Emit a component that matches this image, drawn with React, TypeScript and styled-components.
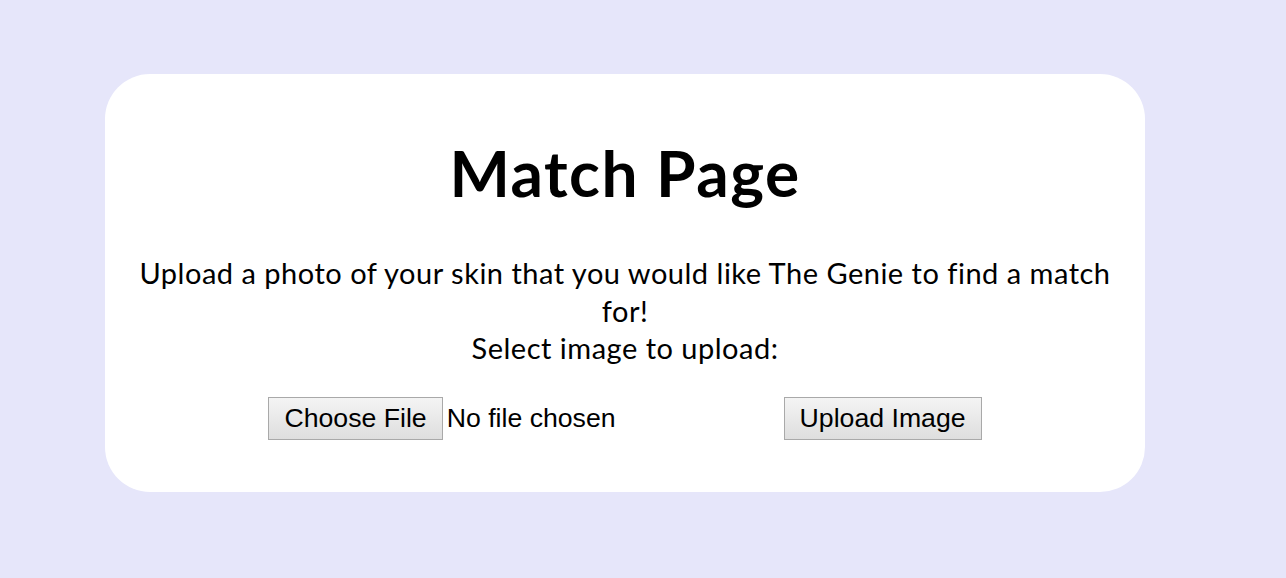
import React from "react";
import styled, { createGlobalStyle } from "styled-components";

const Global = createGlobalStyle`
  html, body { margin: 0; padding: 0; background: #e6e6fa; }
  body { font-family: "Lato", "Noto Sans", sans-serif; }
`;

const Page = styled.div`
  min-height: 578px;
  padding: 74px 141px 0 105px;
  box-sizing: border-box;
`;

const Card = styled.main`
  background: #ffffff;
  border-radius: 45px;
  height: 418px;
  box-sizing: border-box;
  padding: 0 30px;
  display: flex;
  flex-direction: column;
  align-items: center;
  text-align: center;
  color: #000;
`;

const Title = styled.h1`
  margin: 62px 0 0;
  font-family: "Lato", sans-serif;
  font-weight: 700;
  font-size: 64px;
  letter-spacing: 1.5px;
  line-height: 74px;
`;

const Text = styled.p`
  margin: 44px 0 0;
  font-size: 29px;
  letter-spacing: 0.5px;
  line-height: 37.5px;
  max-width: 990px;
`;

const Row = styled.div`
  margin-top: 30px;
  display: flex;
  align-items: center;
  justify-content: center;
  gap: 168px;
`;

const FilePicker = styled.label`
  display: flex;
  align-items: center;
  gap: 4px;
  font-family: "Liberation Sans", Arial, sans-serif;
  font-size: 26.67px;
`;

const HiddenInput = styled.input`
  display: none;
`;

const Button = styled.span`
  display: inline-flex;
  align-items: center;
  justify-content: center;
  height: 43px;
  box-sizing: border-box;
  padding: 0 15px;
  border: 1px solid #a9a9a9;
  background: linear-gradient(#f4f4f4, #dedede);
  font-family: "Liberation Sans", Arial, sans-serif;
  font-size: 26.67px;
  color: #000;
  cursor: default;
`;

const SubmitButton = styled(Button).attrs({ as: "button" })``;

export default function App() {
  return (
    <>
      <Global />
      <Page>
        <Card>
          <Title>Match Page</Title>
          <Text>
            Upload a photo of your skin that you would like The Genie to find a match for!
            <br />
            Select image to upload:
          </Text>
          <Row>
            <FilePicker>
              <HiddenInput type="file" />
              <Button>Choose File</Button>
              <span>No file chosen</span>
            </FilePicker>
            <SubmitButton type="button">Upload Image</SubmitButton>
          </Row>
        </Card>
      </Page>
    </>
  );
}
